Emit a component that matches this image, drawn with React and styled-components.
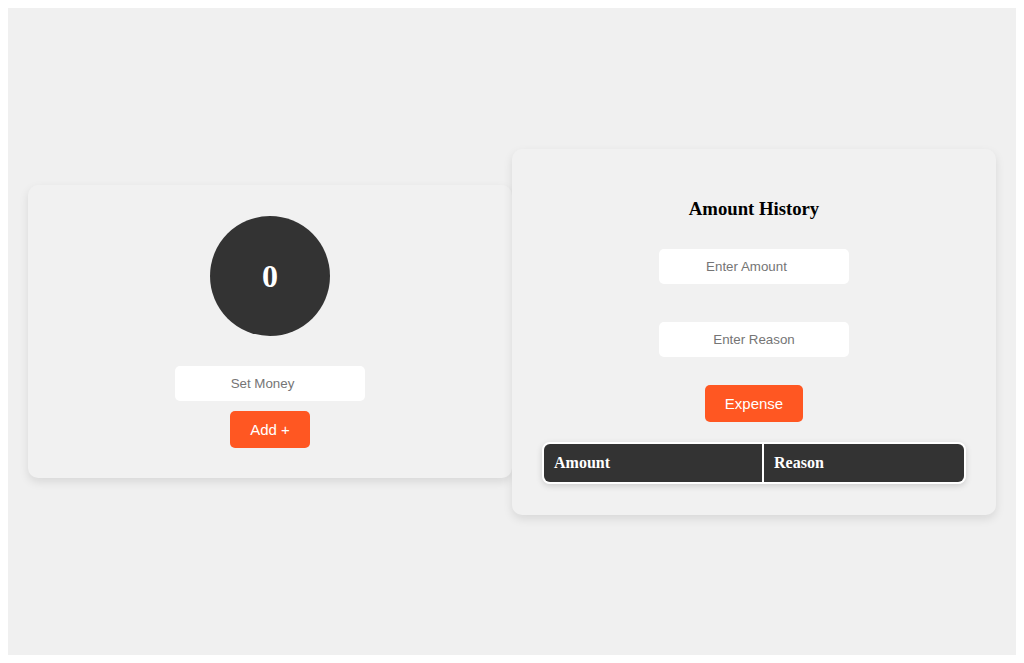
import React, { useState } from 'react';
import styled, { createGlobalStyle } from 'styled-components';

const GlobalStyle = createGlobalStyle`
  body {
    margin: 8px;
    background: #ffffff;
    font-family: "Liberation Serif", "Times New Roman", serif;
  }
`;

const Page = styled.div`
  height: 647px;
  background-color: #f0f0f0;
  display: flex;
  align-items: center;
  padding: 0 20px;
  box-sizing: border-box;
`;

const Card = styled.div`
  flex: 1;
  background-color: #f1f1f1;
  border-radius: 10px;
  box-shadow: 0 4px 10px rgba(0, 0, 0, 0.1);
  padding: ${({ pad }) => pad || '30px'};
  display: flex;
  flex-direction: column;
  align-items: center;
  box-sizing: border-box;
`;

const Balance = styled.div`
  width: 120px;
  height: 120px;
  border-radius: 50%;
  background-color: #333333;
  color: #ffffff;
  display: flex;
  align-items: center;
  justify-content: center;
  margin-bottom: 30px;

  h1 {
    margin: 0;
    font-size: 32px;
    font-weight: bold;
  }
`;

const Input = styled.input`
  width: 190px;
  height: 35px;
  box-sizing: border-box;
  border: none;
  border-radius: 5px;
  background: #ffffff;
  text-align: center;
  font-family: "Liberation Sans", Arial, sans-serif;
  font-size: 13.33px;
  color: #333;
  margin-bottom: ${({ gap }) => gap || '0'};
  outline: none;

  &::placeholder {
    color: #757575;
  }
`;

const Button = styled.button`
  height: 37px;
  padding: 0 20px;
  border: none;
  border-radius: 5px;
  background-color: #ff5722;
  color: #ffffff;
  font-family: "Liberation Sans", Arial, sans-serif;
  font-size: 15px;
  cursor: pointer;
  margin-bottom: ${({ gap }) => gap || '0'};
`;

const Title = styled.h3`
  margin: 19px 0 29px;
  font-size: 18.72px;
  line-height: 22px;
  font-weight: bold;
  color: #000;
`;

const Table = styled.table`
  width: 100%;
  border: 2px solid #ffffff;
  border-radius: 8px;
  border-collapse: separate;
  border-spacing: 0;
  overflow: hidden;
  box-shadow: 0 2px 6px rgba(0, 0, 0, 0.15);
`;

const Th = styled.th`
  background-color: #333333;
  color: #ffffff;
  text-align: left;
  padding: 10px;
  font-size: 16px;
  line-height: 18px;
  font-weight: bold;
  width: ${({ w }) => w || 'auto'};
  border-right: ${({ divider }) => (divider ? '2px solid #ffffff' : 'none')};
`;

const App = () => {
  const [money, setMoney] = useState(0);
  const [input, setInput] = useState('');

  const addMoney = () => {
    const n = Number(input);
    if (!Number.isNaN(n)) setMoney(money + n);
    setInput('');
  };

  return (
    <>
      <GlobalStyle />
      <Page>
        <Card pad="31px 30px 30px">
          <Balance>
            <h1>{money}</h1>
          </Balance>
          <Input
            type="number"
            placeholder="Set Money"
            gap="10px"
            value={input}
            onChange={(e) => setInput(e.target.value)}
          />
          <Button onClick={addMoney}>Add +</Button>
        </Card>
        <Card pad="30px 30px 31px">
          <Title>Amount History</Title>
          <Input type="number" placeholder="Enter Amount" gap="38px" />
          <Input placeholder="Enter Reason" gap="28px" />
          <Button gap="20px">Expense</Button>
          <Table>
            <thead>
              <tr>
                <Th divider w="198px">Amount</Th>
                <Th>Reason</Th>
              </tr>
            </thead>
          </Table>
        </Card>
      </Page>
    </>
  );
};

export default App;
